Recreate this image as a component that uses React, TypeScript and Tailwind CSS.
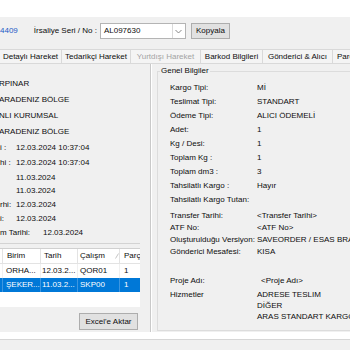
import React from "react";

type RowDef = { label: string; value: string; h: string; lw?: string };

const leftRows: RowDef[] = [
  { label: "", value: "RPINAR", h: "h-[16px]" },
  { label: "", value: "ARADENIZ BÖLGE", h: "h-[16px]" },
  { label: "", value: "NLI KURUMSAL", h: "h-[16px]" },
  { label: "", value: "ARADENIZ BÖLGE", h: "h-[16px]" },
  { label: "i :", value: "12.03.2024 10:37:04", h: "h-[15px]" },
  { label: "hi :", value: "12.03.2024 10:37:04", h: "h-[16px]" },
  { label: "", value: "11.03.2024", h: "h-[13px]" },
  { label: "", value: "11.03.2024", h: "h-[14px]" },
  { label: "rhi:", value: "12.03.2024", h: "h-[14px]" },
  { label: "i:", value: "12.03.2024", h: "h-[14px]" },
  { label: "m Tarihi:", value: "12.03.2024", h: "h-[13px]", lw: "w-[43px]" },
];

const rightTop: [string, string][] = [
  ["Kargo Tipi:", "Mİ"],
  ["Teslimat Tipi:", "STANDART"],
  ["Ödeme Tipi:", "ALICI ÖDEMELİ"],
  ["Adet:", "1"],
  ["Kg / Desi:", "1"],
  ["Toplam Kg :", "1"],
  ["Toplam dm3 :", "3"],
  ["Tahsilatlı Kargo :", "Hayır"],
  ["Tahsilatlı Kargo Tutan:", ""],
];

const rightMid: [string, string][] = [
  ["Transfer Tarihi:", "<Transfer Tarihi>"],
  ["ATF No:", "<ATF No>"],
  ["Oluşturulduğu Versiyon:", "SAVEORDER / ESAS BRANŞ"],
  ["Gönderici Mesafesi:", "KISA"],
];

function Tab({ text, w, disabled }: { text: string; w: string; disabled?: boolean }) {
  return (
    <div
      className={`${w} h-[14px] shrink-0 flex items-center justify-center whitespace-nowrap border-t border-r border-[#d9d9d9] bg-[#f4f4f4] ${
        disabled ? "text-[#a3a3a3]" : ""
      }`}
    >
      {text}
    </div>
  );
}

export default function App() {
  return (
    <div className="w-[350px] h-[350px] overflow-hidden bg-[#f0f0f0] text-[8px] leading-[10px] text-[#0d0d0d] font-['Liberation_Sans',Arial,sans-serif] flex flex-col">
      <div className="h-[17px] shrink-0 bg-white" />

      {/* toolbar */}
      <div className="h-[28px] shrink-0 flex items-center whitespace-nowrap">
        <span className="text-[#2159c6]">4409</span>
        <span className="ml-[16px]">İrsaliye Seri / No :</span>
        <div className="ml-[3px] w-[86px] h-[16px] bg-white border border-[#b4b4b4] flex items-center">
          <span className="pl-[3px] flex-1">AL097630</span>
          <div className="w-[13px] h-full border-l border-[#dadada] flex items-center justify-center">
            <svg width="7" height="5" viewBox="0 0 7 5">
              <path d="M0.5 1 L3.5 4 L6.5 1" fill="none" stroke="#7a7a7a" strokeWidth="0.9" />
            </svg>
          </div>
        </div>
        <div className="ml-[5px] w-[39px] h-[16px] bg-[#e1e1e1] border border-[#adadad] flex items-center justify-center">
          Kopyala
        </div>
      </div>

      {/* tabs */}
      <div className="h-[19px] shrink-0 flex items-end border-b border-[#d9d9d9] whitespace-nowrap overflow-hidden">
        <Tab text="Detaylı Hareket" w="w-[62px]" />
        <Tab text="Tedarikçi Hareket" w="w-[69px]" />
        <Tab text="Yurtdışı Hareket" w="w-[70px]" disabled />
        <Tab text="Barkod Bilgileri" w="w-[62px]" />
        <Tab text="Gönderici & Alıcı" w="w-[70px]" />
        <div className="w-[40px] h-[14px] shrink-0 flex items-center pl-[4px] border-t border-[#d9d9d9] bg-[#f4f4f4]">
          Parça
        </div>
      </div>

      {/* tab page */}
      <div className="h-[268px] shrink-0 flex">
        {/* left */}
        <div className="w-[151px] shrink-0 border-r border-[#c9c9c9] flex flex-col pt-[12px] overflow-hidden whitespace-nowrap">
          {leftRows.map((r, i) => (
            <div key={i} className={`${r.h} flex items-center`}>
              {r.label || i >= 4 ? (
                <>
                  <span className={`${r.lw ?? "w-[16px]"} shrink-0`}>{r.label}</span>
                  <span>{r.value}</span>
                </>
              ) : (
                <span className="-ml-[1px]">{r.value}</span>
              )}
            </div>
          ))}
          <div className="mt-[4px] h-px w-[140px] bg-[#d3d3d3]" />

          {/* grid */}
          <div className="mt-[4px] w-[140px] h-[59px] shrink-0 bg-white border-t border-[#d0d0d0] overflow-hidden">
            <div className="h-[15px] flex border-b border-[#e3e3e3]">
              <div className="w-[3px] shrink-0 border-r border-[#e3e3e3]" />
              <div className="w-[38px] shrink-0 border-r border-[#e3e3e3] flex items-center pl-[4px]">Birim</div>
              <div className="w-[37px] shrink-0 border-r border-[#e3e3e3] flex items-center pl-[3px]">Tarih</div>
              <div className="w-[42px] shrink-0 border-r border-[#e3e3e3] flex items-center pl-[2px]">
                <span>Çalışm</span>
                <svg className="ml-[10px]" width="4" height="6" viewBox="0 0 4 6">
                  <path d="M0.5 5.5 L3.5 0.5" stroke="#b8b8b8" strokeWidth="0.8" />
                </svg>
              </div>
              <div className="w-[30px] shrink-0 flex items-center pl-[4px]">Parça</div>
            </div>
            <div className="h-[14px] flex">
              <div className="w-[3px] shrink-0 border-r border-[#f0f0f0]" />
              <div className="w-[38px] shrink-0 border-r border-[#f0f0f0] flex items-center pl-[3px]">ORHA...</div>
              <div className="w-[37px] shrink-0 border-r border-[#f0f0f0] flex items-center pl-[1px]">12.03.2...</div>
              <div className="w-[42px] shrink-0 border-r border-[#f0f0f0] flex items-center pl-[2px]">QOR01</div>
              <div className="w-[30px] shrink-0 flex items-center pl-[4px]">1</div>
            </div>
            <div className="h-[14px] flex bg-[#0078d7] text-white">
              <div className="w-[3px] shrink-0 border-r border-[#3d96e0]" />
              <div className="w-[38px] shrink-0 border-r border-[#3d96e0] flex items-center pl-[3px]">ŞEKER...</div>
              <div className="w-[37px] shrink-0 border-r border-[#3d96e0] flex items-center pl-[1px]">11.03.2...</div>
              <div className="w-[42px] shrink-0 border-r border-[#3d96e0] flex items-center pl-[2px]">SKP00</div>
              <div className="w-[30px] shrink-0 flex items-center pl-[4px]">1</div>
            </div>
          </div>

          <div className="mt-[6px] ml-[79px] w-[59px] h-[17px] shrink-0 bg-[#e1e1e1] border border-[#adadad] flex items-center justify-center">
            Excel'e Aktar
          </div>
        </div>

        {/* right */}
        <div className="flex-1 border-l border-white overflow-hidden pl-[5px] pt-[2px]">
          <fieldset className="w-[210px] h-[265px] border border-[#dcdcdc] whitespace-nowrap">
            <legend className="ml-[2px] px-[1px] leading-[10px]">Genel Bilgiler</legend>
            <div className="pl-[12px] pt-[5px] flex flex-col">
              {rightTop.map(([l, v]) => (
                <div key={l} className="h-[14px] flex items-center">
                  <span className="w-[87px] shrink-0">{l}</span>
                  <span>{v}</span>
                </div>
              ))}
              <div className="h-[3px]" />
              {rightMid.map(([l, v]) => (
                <div key={l} className="h-[12px] flex items-center">
                  <span className="w-[87px] shrink-0">{l}</span>
                  <span>{v}</span>
                </div>
              ))}
              <div className="h-[17px]" />
              <div className="h-[12px] flex items-center">
                <span className="w-[91px] shrink-0">Proje Adı:</span>
                <span>&lt;Proje Adı&gt;</span>
              </div>
              <div className="mt-[2px] flex">
                <span className="w-[87px] shrink-0 leading-[11px]">Hizmetler</span>
                <div className="flex flex-col leading-[11px]">
                  <span>ADRESE TESLIM</span>
                  <span>DİĞER</span>
                  <span>ARAS STANDART KARGO</span>
                </div>
              </div>
            </div>
          </fieldset>
        </div>
      </div>

      {/* bottom */}
      <div className="h-[7px] shrink-0 bg-white" />
      <div className="flex-1 border-t border-[#d6d6d6] bg-[#f0f0f0]" />
    </div>
  );
}
